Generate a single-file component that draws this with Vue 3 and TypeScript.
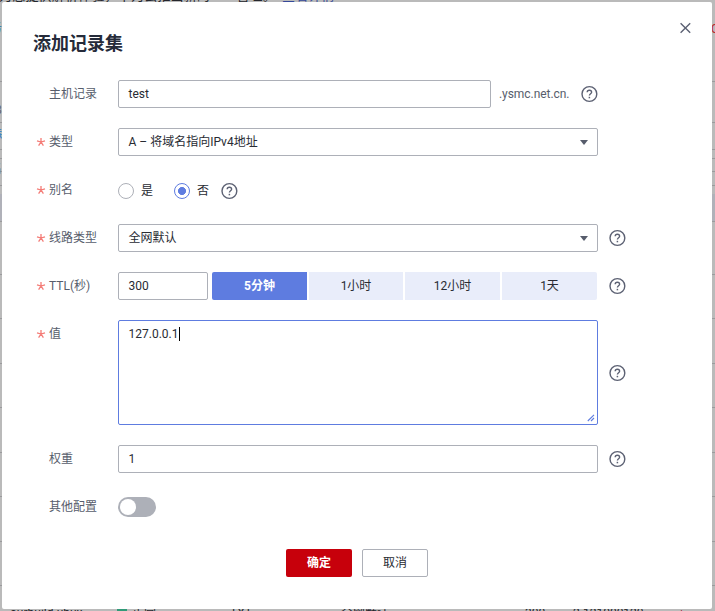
<script setup lang="ts">
import { ref, defineComponent, h } from 'vue'

const HelpIcon = defineComponent({
  render: () =>
    h('svg', { width: 18, height: 18, viewBox: '0 0 18 18', fill: 'none', stroke: '#5c6173', 'stroke-width': 1.4 }, [
      h('circle', { cx: 9.4, cy: 9, r: 7.4 }),
      h('path', { d: 'M7.2 7.3C7.2 5.9 8.1 5.2 9.4 5.2s2.2.8 2.2 2c0 1.5-2.2 1.6-2.2 3.3' }),
      h('path', { d: 'M9.4 11.8v1.5', 'stroke-width': 1.5 }),
    ]),
})

const StarMark = defineComponent({
  render: () =>
    h('svg', { width: 10, height: 10, viewBox: '0 0 10 10', fill: 'none', stroke: '#f47b76', 'stroke-width': 1.3 }, [
      h('path', { d: 'M5 5V1M5 5L1 3.8M5 5l4-1.2M5 5L2.6 8.6M5 5l2.4 3.6' }),
    ]),
})

const alias = ref<'是' | '否'>('否')
const aliasOptions = ['是', '否'] as const
const ttlOptions = ['5分钟', '1小时', '12小时', '1天']
const ttl = ref('5分钟')
const rules: number[] = [81, 122, 149, 158, 171, 185, 221, 274, 318, 363, 407, 452, 496, 541, 585]
</script>

<template>
  <div class="page">
    <div class="backdrop">
      <i v-for="y in rules" :key="y" class="rule" :style="{ top: y + 'px' }"></i>
      <i class="thead"></i>
      <span class="bg top">为您提供解析体验，华为云推出新的DNS管理。<b>查看详情</b></span>
      <span class="bg left-a">务</span>
      <span class="bg left-b">8</span>
      <span class="bg left-c">添</span>
      <span class="bg left-d">名</span>
      <span class="bg right-a">C</span>
      <span class="bg low l1">ourbuild.ubux</span>
      <i class="dot"></i>
      <span class="bg low l2">正常</span>
      <span class="bg low l3">TXT</span>
      <span class="bg low l4">全网默认</span>
      <span class="bg low l5">300</span>
      <span class="bg low l6">2.121000120</span>
      <span class="bg low l7">|</span>
    </div>

    <section class="modal">
      <header>
        <h1>添加记录集</h1>
        <button class="close" type="button" aria-label="关闭">
          <svg width="12" height="12" viewBox="0 0 12 12"><path d="M1.6 1.2l9.6 9.6M11.2 1.2l-9.6 9.6" stroke="#5c6173" stroke-width="1.4" /></svg>
        </button>
      </header>

      <form @submit.prevent>
        <div class="row">
          <span class="mark"></span><label>主机记录</label>
          <div class="box host">test</div>
          <span class="suffix">.ysmc.net.cn.</span>
          <HelpIcon class="help" />
        </div>
        <div class="row">
          <span class="mark"><StarMark /></span><label>类型</label>
          <div class="box wide select">A – 将域名指向IPv4地址<i class="arrow"></i></div>
        </div>
        <div class="row">
          <span class="mark"><StarMark /></span><label>别名</label>
          <div class="radios">
            <span v-for="o in aliasOptions" :key="o" class="radio" @click="alias = o">
              <i :class="{ on: alias === o }"></i><span>{{ o }}</span>
            </span>
          </div>
          <HelpIcon class="help low-by-one" />
        </div>
        <div class="row">
          <span class="mark"><StarMark /></span><label>线路类型</label>
          <div class="box wide select">全网默认<i class="arrow"></i></div>
          <HelpIcon class="help after" />
        </div>
        <div class="row">
          <span class="mark"><StarMark /></span><label>TTL(秒)</label>
          <div class="box ttl">300</div>
          <div class="segments">
            <button v-for="t in ttlOptions" :key="t" type="button" :class="{ active: ttl === t }" @click="ttl = t">{{ t }}</button>
          </div>
          <HelpIcon class="help after" />
        </div>
        <div class="row tall">
          <span class="mark"><StarMark /></span><label>值</label>
          <div class="area">
            <span>127.0.0.1</span><i class="caret"></i>
            <svg class="grip" width="8" height="8" viewBox="0 0 8 8"><path d="M.8 7L7 .8M4 7l3-3" stroke="#5e7ce0" stroke-width="1.1" fill="none" /></svg>
          </div>
          <HelpIcon class="help after middle" />
        </div>
        <div class="row">
          <span class="mark"></span><label>权重</label>
          <div class="box wide">1</div>
          <HelpIcon class="help after" />
        </div>
        <div class="row">
          <span class="mark"></span><label>其他配置</label>
          <span class="toggle"><i></i></span>
        </div>
      </form>

      <footer>
        <button type="button" class="ok">确定</button>
        <button type="button" class="cancel">取消</button>
      </footer>
    </section>
  </div>
</template>

<style>
body { margin: 0; overflow: hidden; }
</style>

<style scoped>
* { box-sizing: border-box; }
svg { display: block; flex: none; }
.page { position: relative; width: 715px; height: 611px; padding: 2px 3px 2px 2px; overflow: hidden; background: #bababa; font: 12px/18px Roboto, "Noto Sans CJK SC", sans-serif; color: #282b33; }
.backdrop { position: absolute; inset: 0; overflow: hidden; }
.rule { position: absolute; left: 0; width: 100%; height: 1px; background: #9b9b9d; }
.thead { position: absolute; left: 0; top: 194px; width: 100%; height: 27px; background: #b0b1b9; }
.bg { position: absolute; white-space: nowrap; line-height: 18px; color: #24262c; }
.bg b { font-weight: 400; color: #344899; margin-left: 6px; }
.top { left: -1px; top: -13px; font-size: 13px; letter-spacing: .2px; }
.left-a { left: -10px; top: 19px; color: #2876a8; }
.left-b { left: -5px; top: 101px; color: #64646b; }
.left-c { left: -10px; top: 126px; color: #2876c8; }
.left-d { left: -10px; top: 160px; color: #62656d; }
.right-a { left: 711px; top: 20px; color: #bd282d; }
.low { top: 604px; }
.l1 { left: 10px; }
.l2 { left: 132px; }
.l3 { left: 230px; }
.l4 { left: 341px; }
.l5 { left: 525px; }
.l6 { left: 573px; }
.l7 { left: 680px; top: 606px; color: #a31f35; }
.dot { position: absolute; left: 117px; top: 607px; width: 10px; height: 10px; border-radius: 2px; background: #319a78; }

.modal { position: relative; width: 710px; height: 607px; background: #fff; border-radius: 2px; padding: 28px 21px 0 31px; }
header { display: flex; justify-content: space-between; height: 50px; }
h1 { margin: 1px 0 0; font-size: 18px; line-height: 26px; font-weight: 700; color: #252b3a; }
button { font: inherit; padding: 0; border: 0; }
.close { width: 12px; height: 12px; background: none; margin-top: -8px; }
form { display: flex; flex-direction: column; gap: 20px; padding-left: 1px; }
.row { display: flex; align-items: center; height: 28px; }
.mark { width: 15px; padding: 0 0 0 2px; }
label { width: 69px; color: #575d6c; }
.box { display: flex; align-items: center; height: 28px; border: 1px solid #adb0b8; border-radius: 2px; padding: 0 9.5px; }
.host { width: 373px; }
.wide { width: 480px; }
.select { justify-content: space-between; padding-right: 9px; }
.arrow { border: 4px solid transparent; border-top: 5px solid #575d6c; border-bottom: 0; }
.suffix { width: 81px; margin-left: 8px; color: #575d6c; letter-spacing: -.06px; }
.after { margin-left: 10px; }
.low-by-one { margin-top: 2px; }
.radios { display: flex; gap: 21px; margin-right: 10px; }
.radio { display: flex; align-items: center; gap: 7px; }
.radio span { padding-top: 1px; }
.radio i { width: 16px; height: 16px; margin-top: 2px; border: 1px solid #adb0b8; border-radius: 50%; }
.radio:last-child { padding-right: 1px; }
.radio i.on { border-color: #5e7ce0; background: radial-gradient(circle, #5e7ce0 3.7px, transparent 4.3px); }
.ttl { width: 90px; }
.segments { display: grid; grid-template-columns: 95px 94px 95px 95px; gap: 2px; width: 390px; padding-left: 4px; }
.segments button { height: 28px; background: #e9edfa; color: #282b33; }
.segments .active { background: #5e7ce0; color: #fff; font-weight: 700; border-radius: 2px 0 0 2px; }
.segments button:last-child { border-radius: 0 2px 2px 0; }
.tall { height: 105px; align-items: flex-start; }
.tall .mark { padding-top: 9px; }
.tall label { padding-top: 5px; }
.area { position: relative; display: flex; width: 480px; height: 105px; border: 1px solid #5e7ce0; border-radius: 2px; padding: 4px 9.5px; }
.caret { width: 1px; height: 14px; margin: 2px 0 0 .5px; background: #000; }
.grip { position: absolute; right: 2px; bottom: 2px; }
.middle { align-self: center; }
.toggle { width: 38px; height: 20px; padding: 2px; border-radius: 10px; background: #adb0b8; }
.toggle i { display: block; width: 16px; height: 16px; border-radius: 50%; background: #fff; }
footer { display: flex; gap: 10px; margin: 28px 0 0 253px; }
footer button { width: 66px; height: 28px; border-radius: 2px; }
.ok { background: #c7000b; color: #fff; font-weight: 700; }
.cancel { background: #fff; border: 1px solid #adb0b8; color: #282b33; }
</style>
